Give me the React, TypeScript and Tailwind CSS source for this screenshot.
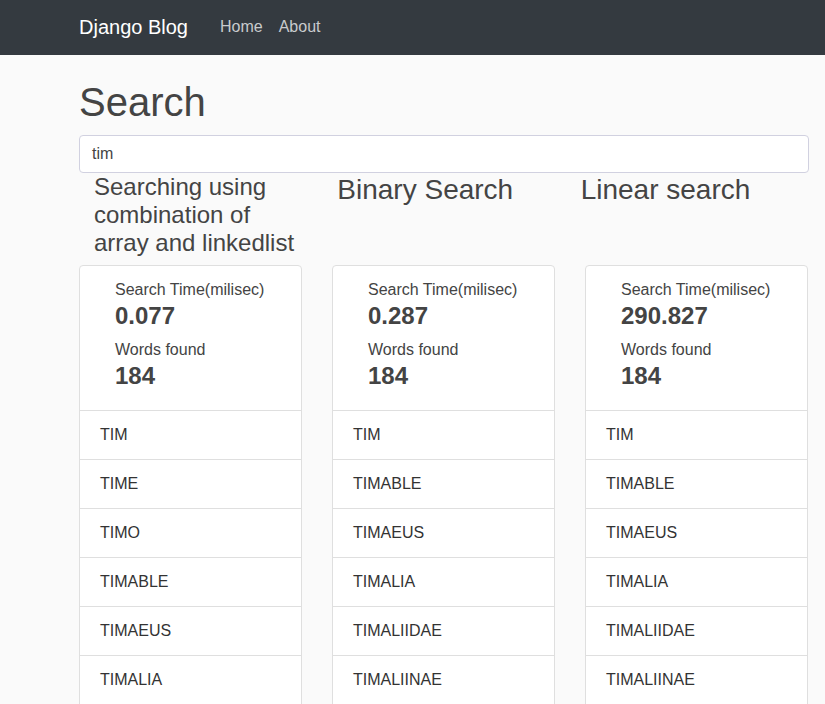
import React from "react";

const font = { fontFamily: '"Liberation Sans", Arial, sans-serif' };

type Col = { time: string; found: string; words: string[] };

const cols: Col[] = [
  { time: "0.077", found: "184", words: ["TIM", "TIME", "TIMO", "TIMABLE", "TIMAEUS", "TIMALIA"] },
  { time: "0.287", found: "184", words: ["TIM", "TIMABLE", "TIMAEUS", "TIMALIA", "TIMALIIDAE", "TIMALIINAE"] },
  { time: "290.827", found: "184", words: ["TIM", "TIMABLE", "TIMAEUS", "TIMALIA", "TIMALIIDAE", "TIMALIINAE"] },
];

function Card({ c }: { c: Col }) {
  return (
    <div className="w-[223px] bg-white border border-[#dfdfdf] rounded-[4px]">
      <div className="pl-[35px] pt-[12px] pb-[20px]">
        <div className="text-[16px] leading-[24px] text-[#444]">Search Time(milisec)</div>
        <div className="text-[24px] leading-[28px] font-bold text-[#444] mb-[8px]">{c.time}</div>
        <div className="text-[16px] leading-[24px] text-[#444]">Words found</div>
        <div className="text-[24px] leading-[28px] font-bold text-[#444]">{c.found}</div>
      </div>
      {c.words.map((w) => (
        <div key={w} className="border-t border-[#dfdfdf] px-[20px] py-[12px] text-[16px] leading-[24px] text-[#333]">
          {w}
        </div>
      ))}
      <div className="border-t border-[#dfdfdf] h-[48px]" />
    </div>
  );
}

export default function App() {
  return (
    <div style={font} className="h-[704px] overflow-hidden bg-[#fafafa]">
      <nav className="h-[55px] bg-[#343a40] flex items-center pl-[79px]">
        <span className="text-white text-[20px] leading-[30px] -mt-[2px]">Django Blog</span>
        <span className="ml-[32px] text-[16px] text-[#c9cbcd] -mt-[2px]">Home</span>
        <span className="ml-[16px] text-[16px] text-[#c9cbcd] -mt-[2px]">About</span>
      </nav>
      <div className="ml-[79px] w-[730px] h-[649px] overflow-hidden">
        <h1 className="mt-[23px] text-[40px] leading-[48px] text-[#444] mb-[9px]">Search</h1>
        <div className="h-[38px] w-[730px] bg-white border border-[#d1d1e0] rounded-[4px] flex items-center pl-[12px] text-[16px] text-[#444]">
          tim
        </div>
        <div className="grid grid-cols-3">
          <div className="px-[15px]">
            <h4 className="text-[24px] leading-[28px] text-[#444]">Searching using combination of array and linkedlist</h4>
          </div>
          <div className="px-[15px]">
            <h3 className="text-[28px] leading-[34px] text-[#444]">Binary Search</h3>
          </div>
          <div className="px-[15px]">
            <h3 className="text-[28px] leading-[34px] text-[#444]">Linear search</h3>
          </div>
        </div>
        <div className="mt-[8px] flex gap-[30px] items-start">
          {cols.map((c, i) => (
            <Card key={i} c={c} />
          ))}
        </div>
      </div>
    </div>
  );
}
